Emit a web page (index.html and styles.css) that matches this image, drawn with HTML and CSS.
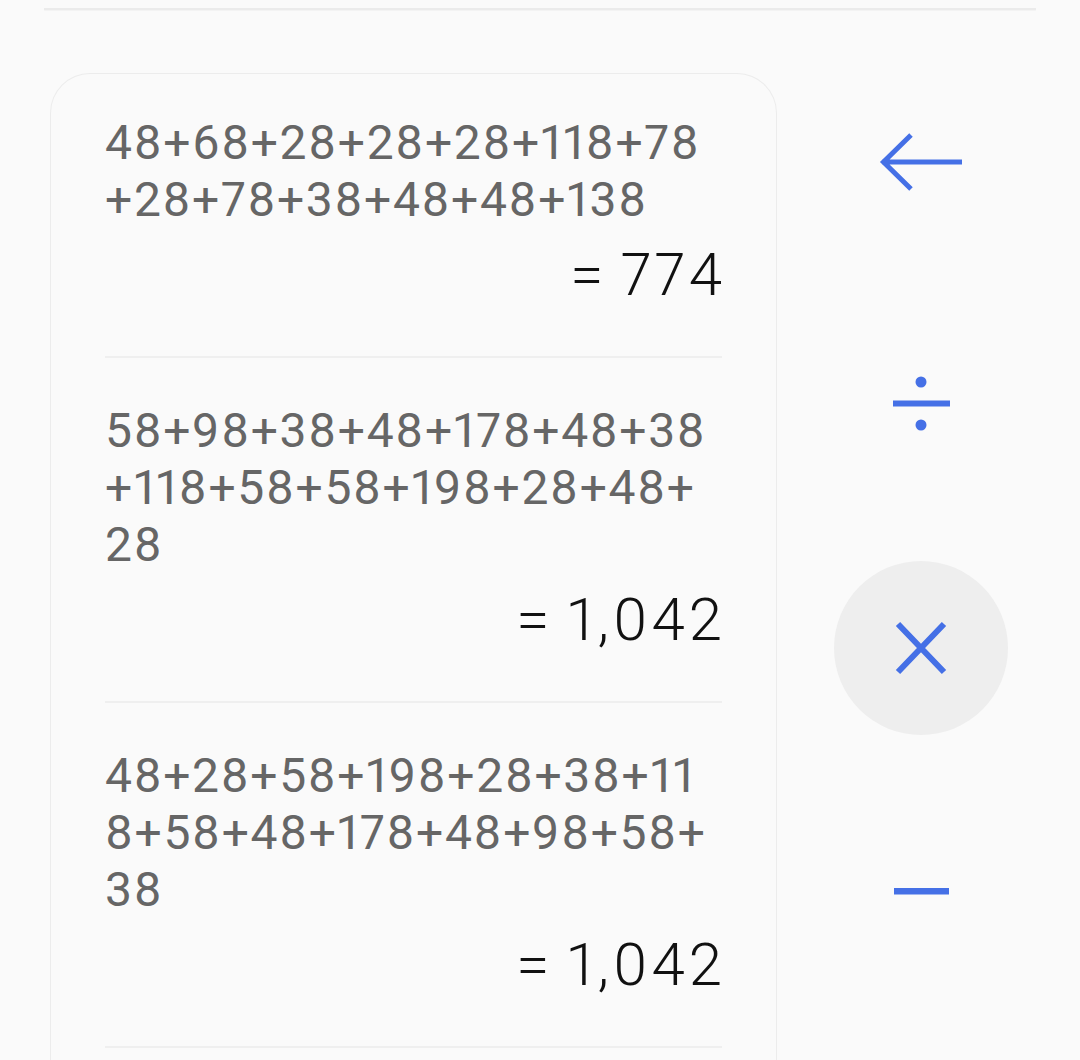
FILE: index.html
```html
<!DOCTYPE html>
<html lang="en">
<head>
<meta charset="utf-8">
<title>Calculator history</title>
<link rel="stylesheet" href="styles.css">
</head>
<body>
<div class="topbar"><div class="divider"></div></div>
<main class="layout">
  <section class="history">
    <div class="entry">
      <div class="expr"><span class="line">48+68+28+28+28+118+78</span><span class="line">+28+78+38+48+48+138</span></div>
      <div class="result">= 774</div>
    </div>
    <div class="entry">
      <div class="expr"><span class="line">58+98+38+48+178+48+38</span><span class="line">+118+58+58+198+28+48+</span><span class="line">28</span></div>
      <div class="result">= 1,042</div>
    </div>
    <div class="entry">
      <div class="expr"><span class="line">48+28+58+198+28+38+11</span><span class="line">8+58+48+178+48+98+58+</span><span class="line">38</span></div>
      <div class="result">= 1,042</div>
    </div>
  </section>
  <div class="keys">
    <button class="key" aria-label="Backspace">
      <svg width="174" height="174" viewBox="0 0 174 174"><path d="M48 87 H128 M77 60 L49.5 87 L77 114" fill="none" stroke="#4570e6" stroke-width="5"/></svg>
    </button>
    <button class="key" aria-label="Divide">
      <svg width="174" height="174" viewBox="0 0 174 174"><rect x="59" y="82.5" width="57" height="6" fill="#4570e6"/><circle cx="87" cy="64" r="5.5" fill="#4570e6"/><circle cx="87" cy="107" r="5.5" fill="#4570e6"/></svg>
    </button>
    <button class="key key-active" aria-label="Multiply">
      <svg width="174" height="174" viewBox="0 0 174 174"><path d="M64 63 L110 111 M110 63 L64 111" fill="none" stroke="#4570e6" stroke-width="6"/></svg>
    </button>
    <button class="key" aria-label="Subtract">
      <svg width="174" height="174" viewBox="0 0 174 174"><rect x="60" y="84" width="55" height="6.5" fill="#4570e6"/></svg>
    </button>
  </div>
</main>
</body>
</html>
```

FILE: styles.css
```css
html, body {
  margin: 0;
  padding: 0;
  background: #fafafa;
  font-family: Roboto, "Liberation Sans", sans-serif;
  overflow: hidden;
}

.topbar {
  padding: 8px 44px 0;
}

.divider {
  height: 2px;
  background: #ebebeb;
  box-shadow: 0 1px 1px rgba(0, 0, 0, 0.03);
}

.layout {
  display: flex;
  align-items: flex-start;
  gap: 57px;
  padding: 63px 0 0 50px;
}

.history {
  border: 1px solid #ececec;
  border-bottom: none;
  border-radius: 40px 40px 0 0;
  padding: 0 54px 200px;
  box-sizing: content-box;
  width: 617px;
  background: #fafafa;
}

.entry {
  padding: 44px 0 46px;
  border-bottom: 2px solid #efefef;
}

.entry:first-child {
  padding-top: 40px;
}

.expr {
  font-size: 48px;
  line-height: 57px;
  color: #666666;
  letter-spacing: 1.65px;
  font-variant-numeric: proportional-nums;
}

.line {
  display: block;
  white-space: nowrap;
}

.result {
  margin-top: 12px;
  font-size: 60px;
  line-height: 70px;
  font-weight: 300;
  color: #111111;
  text-align: right;
  letter-spacing: 4px;
  word-spacing: -5px;
  margin-right: -4px;
  font-variant-numeric: proportional-nums;
}

.keys {
  display: flex;
  flex-direction: column;
  gap: 69px;
  padding-top: 2px;
}

.key {
  width: 174px;
  height: 174px;
  border: none;
  padding: 0;
  margin: 0;
  border-radius: 50%;
  background: transparent;
  display: flex;
  align-items: center;
  justify-content: center;
}

.key svg {
  display: block;
}

.key-active {
  background: #eeeeee;
}
```
